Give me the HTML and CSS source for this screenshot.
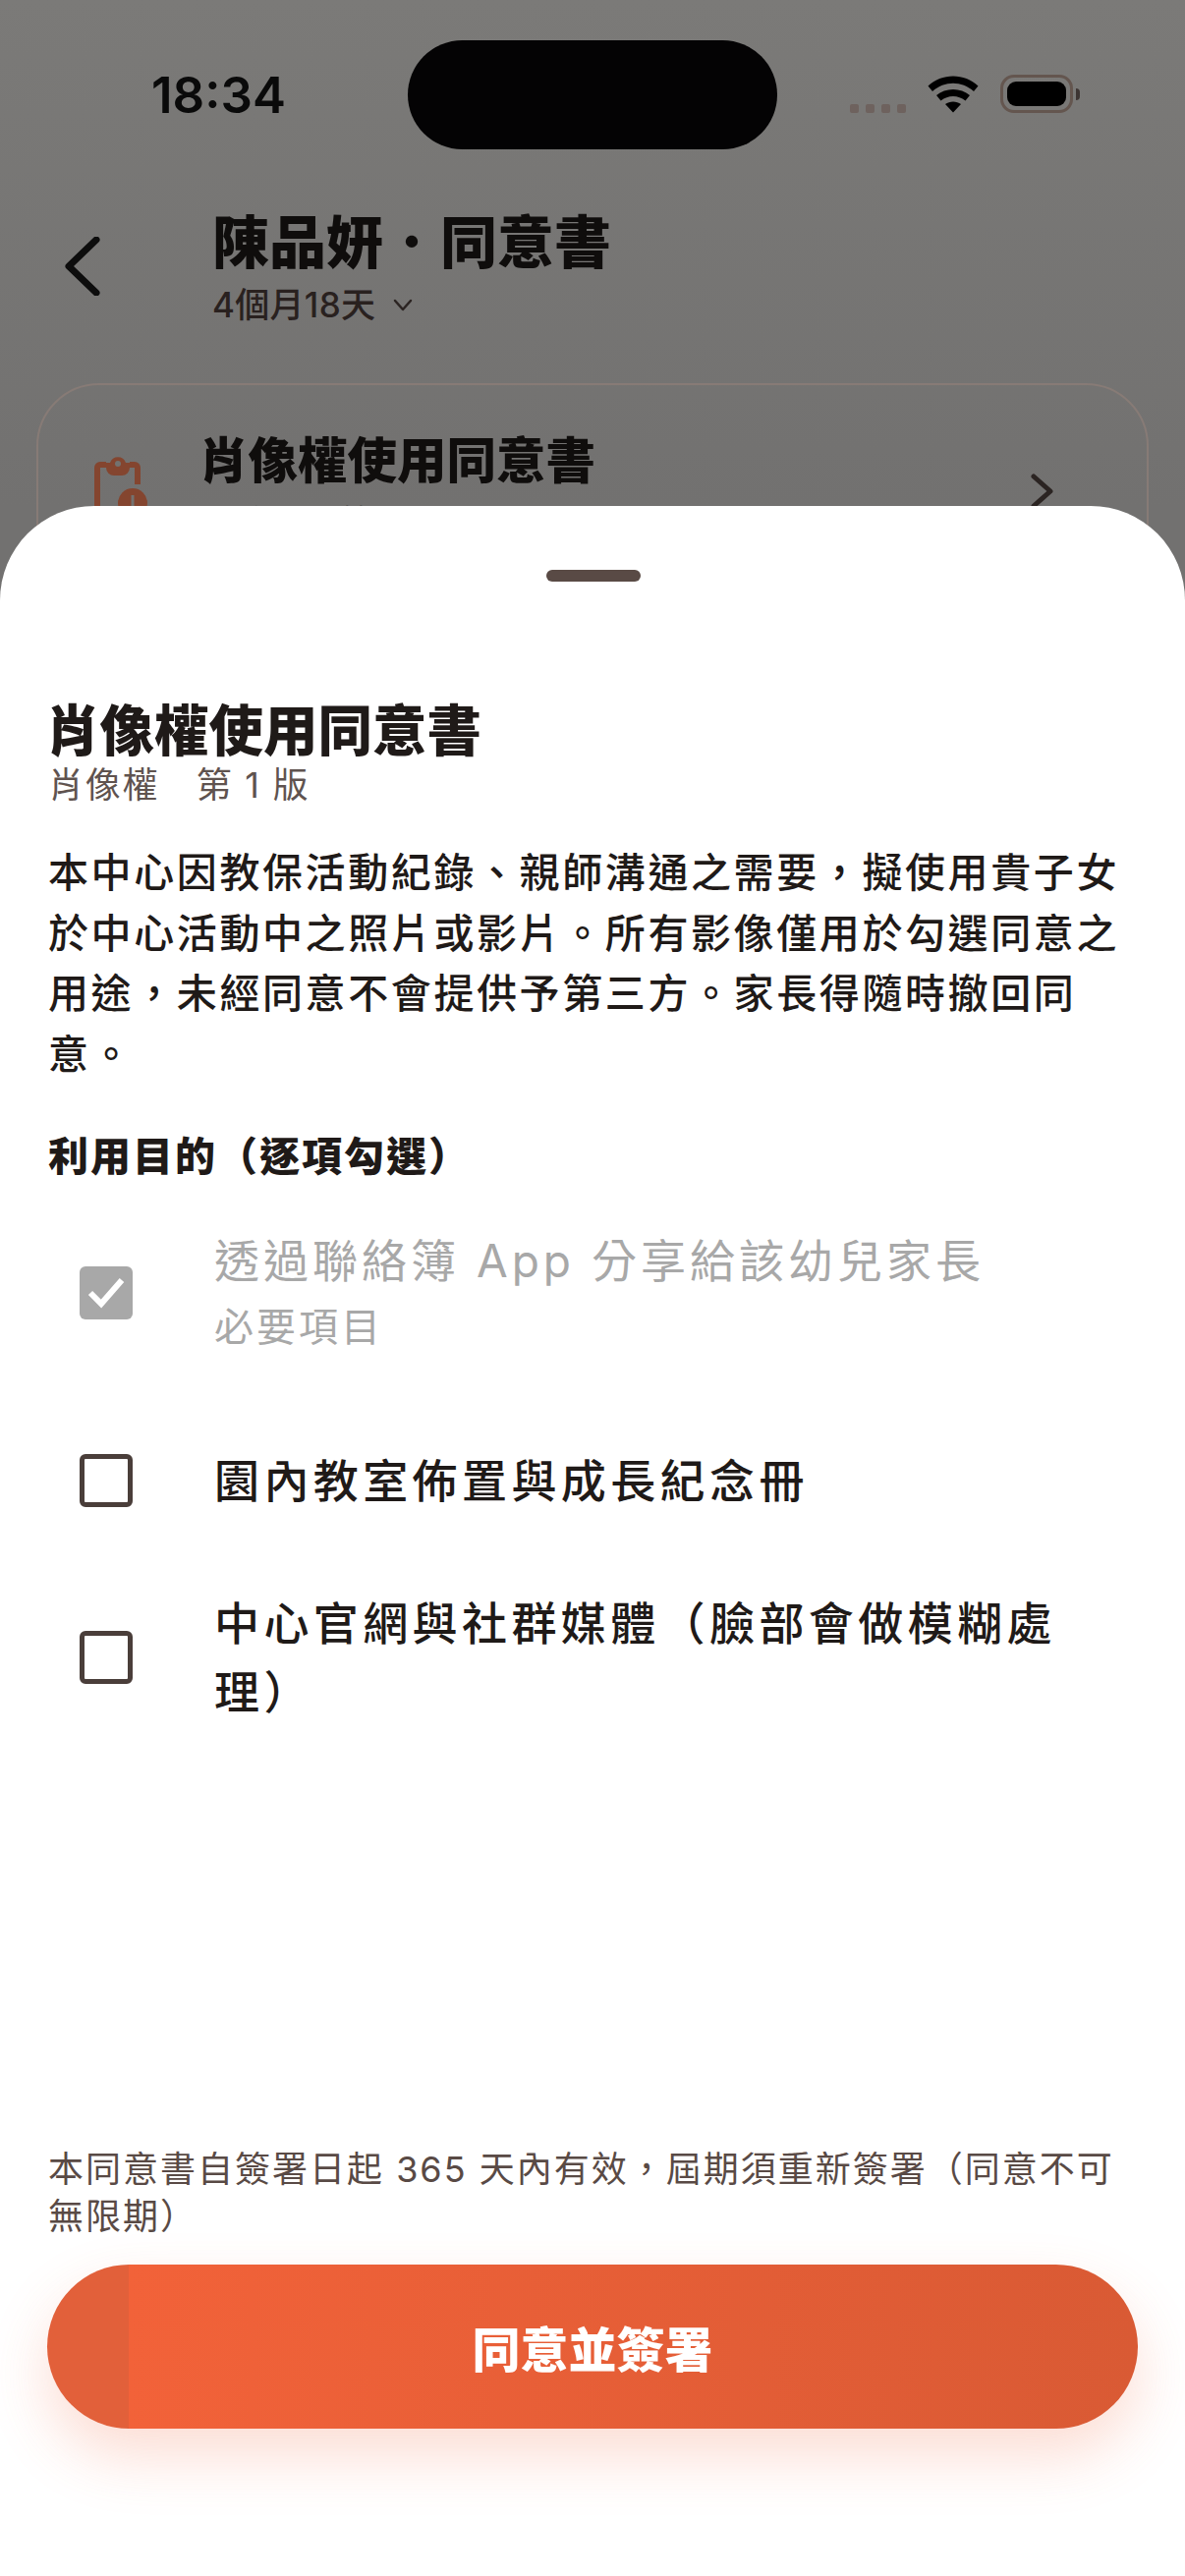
FILE: index.html
```html
<!DOCTYPE html>
<html lang="zh-Hant">
<head>
    <meta charset="UTF-8">
    <meta name="viewport" content="width=device-width, initial-scale=1.0">
    <title>同意書</title>
    <link rel="stylesheet" href="styles.css">
</head>
<body>
    <div class="screen">
        <div class="status_bar">
            <span class="status_time">18:34</span>
            <div class="island"></div>
            <div class="status_icons">
                <div class="signal_dots"><i></i><i></i><i></i><i></i></div>
                <svg class="wifi" width="52" height="38" viewBox="0 0 52 38">
                    <path d="M0.5 10.5C14 -3 38 -3 51.500 10.500L47 16C35 5 17 5 5 16Z" fill="#000"/>
                    <path d="M9 20C18 12 34 12 43 20L38.500 25.500C31 19.500 21 19.500 13.500 25.500Z" fill="#000"/>
                    <path d="M18 29C22.500 25.500 29.500 25.500 34 29L26 37.500Z" fill="#000"/>
                </svg>
                <div class="battery"><div class="battery_fill"></div></div>
                <div class="battery_cap"></div>
            </div>
        </div>

        <div class="top_bar">
            <svg class="back_icon" width="36" height="60" viewBox="0 0 36 60">
                <path d="M32 3L4 30L32 57" fill="none" stroke="#0d0d0d" stroke-width="7" stroke-linecap="round" stroke-linejoin="round"/>
            </svg>
            <div class="top_titles">
                <h1 class="page_title">陳品妍<span class="title_dot">・</span>同意書</h1>
                <div class="page_sub">
                    <span>4個月18天</span>
                    <svg width="20" height="13" viewBox="0 0 20 13">
                        <path d="M2 2L10 11L18 2" fill="none" stroke="#2b2422" stroke-width="2.500" stroke-linecap="round" stroke-linejoin="round"/>
                    </svg>
                </div>
            </div>
        </div>

        <div class="consent_card">
            <svg class="clip_icon" width="56" height="70" viewBox="0 0 56 70">
                <path d="M12 9H6a3 3 0 0 0-3 3V60M36 9H41a3 3 0 0 1 3 3V29" fill="none" stroke="#84452f" stroke-width="6"/>
                <path d="M12 7H16a8.500 8.500 0 0 1 16 0H36V12a8 8 0 0 1-8 8H20a8 8 0 0 1-8-8Z" fill="#84452f"/>
                <circle cx="24" cy="8" r="3" fill="#737270"/>
                <circle cx="39" cy="48" r="15" fill="#84452f"/>
                <path d="M39 40V52" stroke="#737270" stroke-width="3"/>
            </svg>
            <div class="card_text">
                <div class="card_title">肖像權使用同意書</div>
                <div class="card_sub">肖像權　第 1 版</div>
            </div>
            <svg class="card_arrow" width="24" height="36" viewBox="0 0 24 36">
                <path d="M3 3L20 18L3 33" fill="none" stroke="#2b2422" stroke-width="5" stroke-linecap="round" stroke-linejoin="round"/>
            </svg>
        </div>

        <div class="sheet">
            <div class="grabber"></div>
            <h2 class="sheet_title">肖像權使用同意書</h2>
            <p class="sheet_sub">肖像權　第 1 版</p>
            <p class="sheet_body">本中心因教保活動紀錄、親師溝通之需要，擬使用貴子女於中心活動中之照片或影片。所有影像僅用於勾選同意之用途，未經同意不會提供予第三方。家長得隨時撤回同意。</p>
            <h3 class="purpose_head">利用目的（逐項勾選）</h3>

            <div class="purpose_list">
                <div class="purpose_row row_required">
                    <div class="check check_on">
                        <svg width="40" height="32" viewBox="0 0 40 32">
                            <path d="M4 16L15 27L36 3" fill="none" stroke="#fff" stroke-width="6"/>
                        </svg>
                    </div>
                    <div class="purpose_text">
                        <div class="purpose_label">透過聯絡簿 App 分享給該幼兒家長</div>
                        <div class="purpose_note">必要項目</div>
                    </div>
                </div>
                <div class="purpose_row row_album">
                    <div class="check"></div>
                    <div class="purpose_text">
                        <div class="purpose_label">園內教室佈置與成長紀念冊</div>
                    </div>
                </div>
                <div class="purpose_row row_web">
                    <div class="check"></div>
                    <div class="purpose_text">
                        <div class="purpose_label">中心官網與社群媒體（臉部會做模糊處理）</div>
                    </div>
                </div>
            </div>

            <p class="valid_note">本同意書自簽署日起 365 天內有效，屆期須重新簽署（同意不可無限期）</p>
            <button class="sign_btn">同意並簽署</button>
        </div>
    </div>
</body>
</html>
```

FILE: styles.css
```css
* {
    box-sizing: border-box;
}

body {
    margin: 0;
    font-family: Inter, "Noto Sans CJK TC", sans-serif;
    color: #1f1a18;
    text-spacing-trim: space-all;
}

.screen {
    position: relative;
    width: 1206px;
    height: 2622px;
    overflow: hidden;
    background: linear-gradient(180deg, #7b7a78 0, #727170 515px);
}

.status_bar {
    display: flex;
    align-items: center;
    height: 111px;
    margin-top: 41px;
    padding-left: 154px;
}

.status_time {
    width: 261px;
    font-size: 51px;
    font-weight: 600;
    color: #0a0a0a;
}

.island {
    width: 376px;
    height: 111px;
    border-radius: 56px;
    background: #040304;
}

.status_icons {
    display: flex;
    align-items: center;
    margin-left: 74px;
    padding-bottom: 2px;
}

.signal_dots {
    display: flex;
    gap: 7px;
    margin: 30px 22px 0 0;
}

.signal_dots i {
    width: 9px;
    height: 9px;
    border-radius: 2px;
    background: #6e625e;
}

.battery {
    width: 74px;
    height: 39px;
    margin-left: 22px;
    padding: 4px;
    border: 3px solid #64564f;
    border-radius: 14px;
}

.battery_fill {
    height: 100%;
    border-radius: 9px;
    background: #000;
}

.battery_cap {
    width: 4px;
    height: 12px;
    margin-left: 3px;
    border-radius: 0 4px 4px 0;
    background: #3d3533;
}

.top_bar {
    display: flex;
    align-items: center;
    margin-top: 60px;
    padding-left: 66px;
}

.back_icon {
    margin-bottom: 2px;
}

.top_titles {
    margin-left: 114px;
}

.page_title {
    margin: 0;
    font-size: 58px;
    font-weight: 900;
    line-height: 70px;
    color: #0f0d0c;
}

.title_dot {
    font-weight: 400;
}

.page_sub {
    display: flex;
    align-items: center;
    gap: 18px;
    margin-top: 6px;
    font-size: 35px;
    font-weight: 500;
    line-height: 44px;
    letter-spacing: 0.300px;
    color: #29211f;
}

.consent_card {
    display: flex;
    align-items: flex-start;
    height: 240px;
    margin: 58px 37px 0;
    padding: 43px 94px 0 57px;
    border: 2px solid #877b76;
    border-radius: 64px;
}

.clip_icon {
    margin-top: 29px;
}

.card_text {
    flex: 1;
    margin-left: 50px;
}

.card_title {
    margin-top: 4px;
    font-size: 50.500px;
    font-weight: 900;
    line-height: 60px;
    color: #0f0d0c;
}

.card_sub {
    margin-top: 9px;
    padding-left: 8px;
    font-size: 34px;
    line-height: 48px;
    color: #29211f;
}

.card_arrow {
    margin-top: 47px;
}

/* bottom sheet lies over the dimmed page */
.sheet {
    position: absolute;
    left: 0;
    right: 0;
    top: 515px;
    bottom: 0;
    display: flex;
    flex-direction: column;
    padding: 64px 48px 150px 49px;
    border-radius: 96px 96px 0 0;
    background: #fff;
}

.grabber {
    align-self: center;
    width: 96px;
    height: 12px;
    margin-top: 1px;
    border-radius: 6px;
    background: #594a45;
}

.sheet_title {
    margin: 120px 0 0 -3px;
    font-size: 55.500px;
    font-weight: 900;
    line-height: 64px;
}

.sheet_sub {
    margin: 0;
    font-size: 36px;
    line-height: 46px;
    letter-spacing: 1.700px;
    color: #5f534f;
}

.sheet_body {
    margin: 36px 0 0;
    font-size: 41px;
    font-weight: 500;
    line-height: 61.500px;
    letter-spacing: 2.600px;
}

.purpose_head {
    margin: 43px 0 0;
    font-size: 41px;
    font-weight: 900;
    line-height: 60px;
    letter-spacing: 2px;
}

.purpose_list {
    display: flex;
    flex-direction: column;
    margin-top: 41px;
}

.purpose_row {
    display: flex;
    align-items: center;
    padding-left: 32px;
}

.row_required .check {
    margin-top: 4px;
}

.row_album {
    margin-top: 93px;
}

.row_web {
    margin-top: 75px;
}

.check {
    flex-shrink: 0;
    display: flex;
    align-items: center;
    justify-content: center;
    width: 54px;
    height: 54px;
    border: 5px solid #4a3e3a;
    border-radius: 6px;
}

.check_on {
    border: 0;
    background: #a8a8a8;
}

.purpose_text {
    margin-left: 83px;
    padding-right: 30px;
}

.purpose_label {
    font-size: 46px;
    font-weight: 500;
    line-height: 70px;
    letter-spacing: 4.400px;
}

.purpose_note {
    margin-top: 5px;
    font-size: 40px;
    line-height: 56px;
    letter-spacing: 3px;
}

.row_required .purpose_text {
    color: #a8a8a8;
}

.row_required .purpose_label {
    font-weight: 400;
    letter-spacing: 4px;
}

.valid_note {
    margin: auto 0 0;
    font-size: 36px;
    line-height: 48px;
    letter-spacing: 2px;
    color: #594a45;
}

.sign_btn {
    flex-shrink: 0;
    height: 167px;
    margin: 25px 0 0 -1px;
    border: 0;
    border-radius: 84px;
    font-family: inherit;
    font-size: 49px;
    font-weight: 900;
    color: #fff;
    background: linear-gradient(90deg, #e2603a 0, #e2603a 83px, #f26239 83px, #d95a34 100%);
    box-shadow: 0 28px 60px rgba(242, 98, 57, 0.22);
}
```
